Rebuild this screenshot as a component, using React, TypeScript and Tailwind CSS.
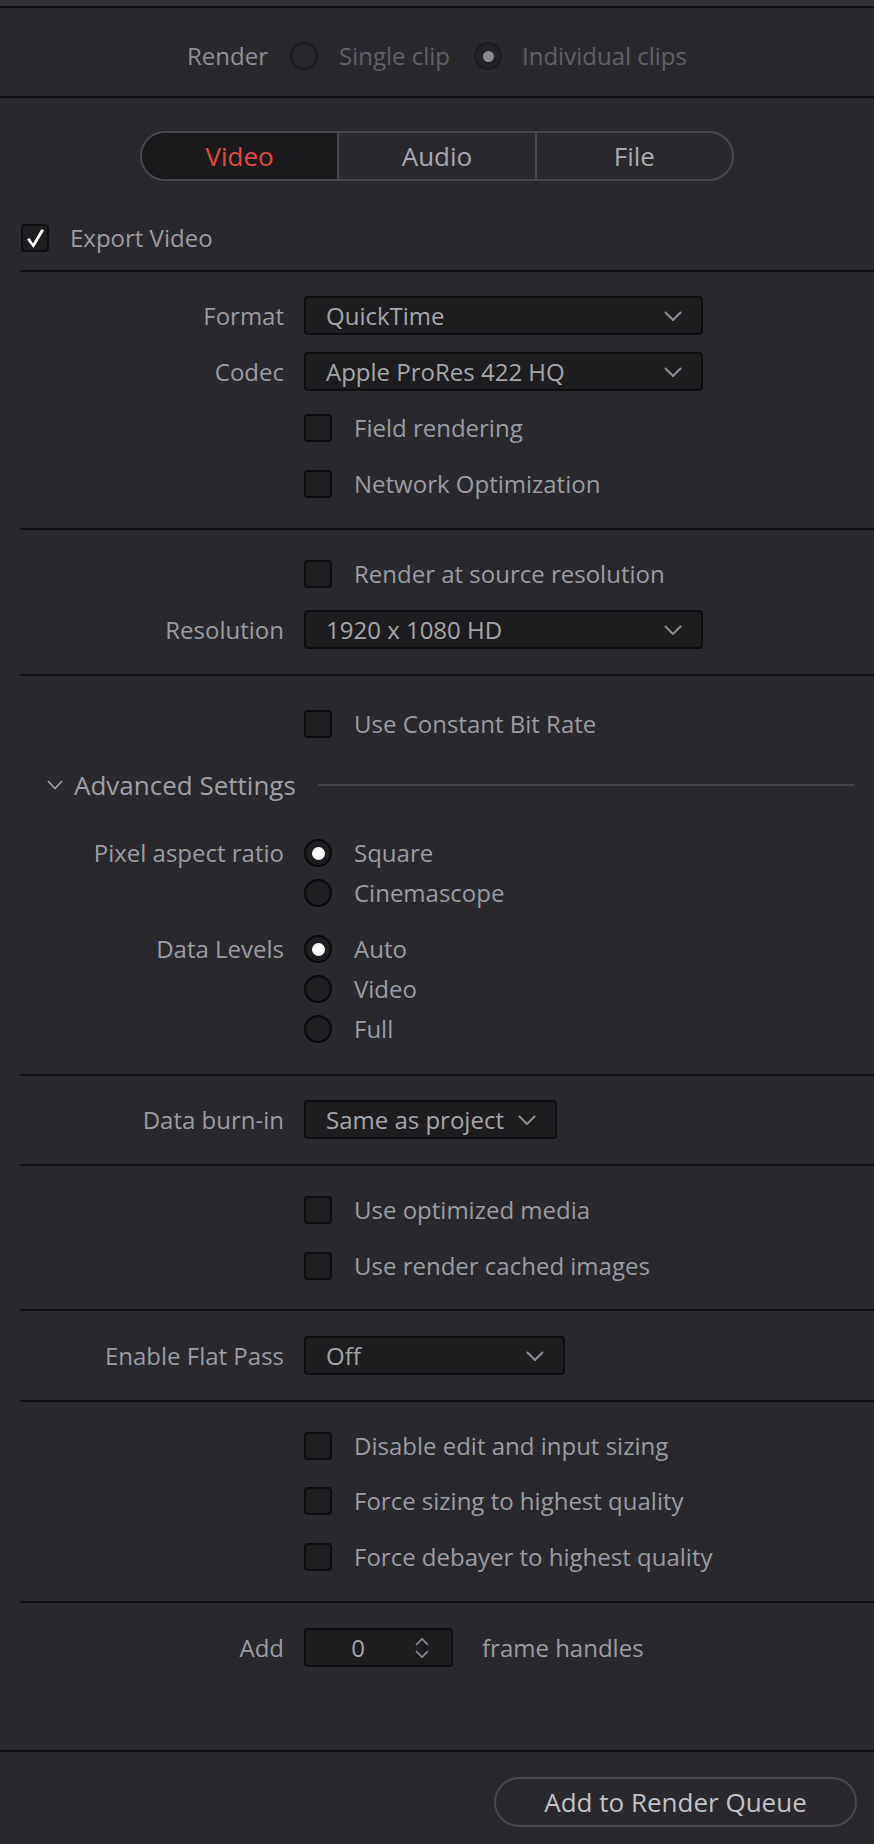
import React from "react"

function Chevron() {
    return (
        <svg width="18" height="10" viewBox="0 0 18 10" className="shrink-0">
            <polyline points="1,1 9,9 17,1" fill="none" stroke="#8e8e92" strokeWidth="2" />
        </svg>
    )
}

function Line({ inset = true, className = "" }: { inset?: boolean; className?: string }) {
    return <div className={`h-[2px] bg-[#111113] ${inset ? "ml-[20px]" : ""} ${className}`} />
}

function Box() {
    return <div className="w-[28px] h-[28px] shrink-0 rounded-[4px] bg-[#1e1e20] border-2 border-[#0e0e10]" />
}

function Check({ label, className = "" }: { label: string; className?: string }) {
    return (
        <div className={`flex items-center pl-[304px] gap-[22px] leading-[28px] ${className}`}>
            <Box />
            <span>{label}</span>
        </div>
    )
}

function Dropdown({ value, width }: { value: string; width?: string }) {
    return (
        <div className={`h-[39px] ${width ?? ""} rounded-[4px] bg-[#1d1d1f] border-2 border-[#0e0e10] flex items-center justify-between gap-[14px] pl-[20px] pr-[19px] text-[#a6a6aa]`}>
            <span>{value}</span>
            <Chevron />
        </div>
    )
}

function Field({ label, children, className = "" }: { label: string; children: React.ReactNode; className?: string }) {
    return (
        <div className={`flex items-center ${className}`}>
            <div className="w-[284px] text-right">{label}</div>
            <div className="ml-[20px] flex items-center">{children}</div>
        </div>
    )
}

function Radio({ on }: { on?: boolean }) {
    return (
        <div className="w-[28px] h-[28px] shrink-0 rounded-full bg-[#1e1e20] border-2 border-[#0b0b0d] flex items-center justify-center">
            {on && <div className="w-[13px] h-[13px] rounded-full bg-white" />}
        </div>
    )
}

function RadioGroup({ label, options, className = "" }: { label: string; options: string[]; className?: string }) {
    return (
        <div className={`flex items-start leading-[28px] ${className}`}>
            <div className="w-[284px] text-right">{label}</div>
            <div className="ml-[20px] flex flex-col gap-[12px]">
                {options.map((o, i) => (
                    <div key={o} className="flex items-center gap-[22px]">
                        <Radio on={i === 0} />
                        <span>{o}</span>
                    </div>
                ))}
            </div>
        </div>
    )
}

export default function App() {
    return (
        <div className="w-[874px] h-[1844px] bg-[#28282d] font-['Open_Sans',sans-serif] text-[24px] text-[#9c9ca0] overflow-hidden">
            <div className="h-[6px] bg-[#303036]" />
            <Line inset={false} />

            {/* render mode */}
            <div className="h-[88px] pt-[8px] flex items-center justify-center leading-[28px]">
                <span className="text-[#909094]">Render</span>
                <div className="ml-[22px] w-[28px] h-[28px] rounded-full border-2 border-[#1c1c1f]" />
                <span className="ml-[21px] text-[#606066]">Single clip</span>
                <div className="ml-[24px] w-[28px] h-[28px] rounded-full border-2 border-[#1c1c1f] bg-[#222225] flex items-center justify-center">
                    <div className="w-[11px] h-[11px] rounded-full bg-[#8a8a8f]" />
                </div>
                <span className="ml-[20px] text-[#606066]">Individual clips</span>
            </div>
            <Line inset={false} />

            {/* tabs */}
            <div className="mt-[33px] mx-auto w-[594px] h-[50px] rounded-full border-2 border-[#47484e] flex overflow-hidden text-[26px]">
                <div className="flex-1 flex items-center justify-center bg-[#1a1a1c] text-[#e2493f]">Video</div>
                <div className="flex-1 flex items-center justify-center border-l-2 border-[#47484e] text-[#a9a9ad]">Audio</div>
                <div className="flex-1 flex items-center justify-center border-l-2 border-[#47484e] text-[#a9a9ad]">File</div>
            </div>

            <div className="mt-[43px] flex items-center pl-[21px] gap-[21px] leading-[28px]">
                <div className="w-[28px] h-[28px] rounded-[4px] bg-[#1e1e20] border-2 border-[#0e0e10] flex items-center justify-center">
                    <svg width="22" height="22" viewBox="0 0 22 22">
                        <path d="M3 12.5 L5.5 11 L9 16.5 L17.5 2 L20 3.5 L9.5 21 Z" fill="#ffffff" />
                    </svg>
                </div>
                <span>Export Video</span>
            </div>
            <Line className="mt-[18px]" />

            <Field label="Format" className="mt-[24px]">
                <Dropdown value="QuickTime" width="w-[399px]" />
            </Field>
            <Field label="Codec" className="mt-[17px]">
                <Dropdown value="Apple ProRes 422 HQ" width="w-[399px]" />
            </Field>
            <Check label="Field rendering" className="mt-[23px]" />
            <Check label="Network Optimization" className="mt-[28px]" />
            <Line className="mt-[30px]" />

            <Check label="Render at source resolution" className="mt-[30px]" />
            <Field label="Resolution" className="mt-[22px]">
                <Dropdown value="1920 x 1080 HD" width="w-[399px]" />
            </Field>
            <Line className="mt-[25px]" />

            <Check label="Use Constant Bit Rate" className="mt-[34px]" />

            {/* advanced */}
            <div className="mt-[32px] h-[30px] flex items-center pl-[47px] pr-[20px] text-[26px] text-[#a0a0a4]">
                <svg width="16" height="10" viewBox="0 0 16 10" className="shrink-0">
                    <polyline points="1,1 8,8.5 15,1" fill="none" stroke="#a0a0a4" strokeWidth="1.8" />
                </svg>
                <span className="ml-[11px] whitespace-nowrap">Advanced Settings</span>
                <div className="ml-[22px] flex-1 h-[2px] bg-[#434349]" />
            </div>

            <RadioGroup label="Pixel aspect ratio" options={["Square", "Cinemascope"]} className="mt-[39px]" />
            <RadioGroup label="Data Levels" options={["Auto", "Video", "Full"]} className="mt-[28px]" />
            <Line className="mt-[31px]" />

            <Field label="Data burn-in" className="mt-[24px]">
                <Dropdown value="Same as project" />
            </Field>
            <Line className="mt-[25px]" />

            <Check label="Use optimized media" className="mt-[30px]" />
            <Check label="Use render cached images" className="mt-[28px]" />
            <Line className="mt-[29px]" />

            <Field label="Enable Flat Pass" className="mt-[25px]">
                <Dropdown value="Off" width="w-[261px]" />
            </Field>
            <Line className="mt-[25px]" />

            <Check label="Disable edit and input sizing" className="mt-[30px]" />
            <Check label="Force sizing to highest quality" className="mt-[27px]" />
            <Check label="Force debayer to highest quality" className="mt-[28px]" />
            <Line className="mt-[30px]" />

            <Field label="Add" className="mt-[25px]">
                <div className="h-[39px] w-[149px] rounded-[4px] bg-[#1d1d1f] border-2 border-[#0e0e10] flex items-center text-[#a6a6aa]">
                    <span className="w-[104px] text-center">0</span>
                    <svg width="16" height="22" viewBox="0 0 16 22" className="ml-[4px]">
                        <polyline points="2,8 8,2 14,8" fill="none" stroke="#8e8e92" strokeWidth="1.6" />
                        <polyline points="2,14 8,20 14,14" fill="none" stroke="#8e8e92" strokeWidth="1.6" />
                    </svg>
                </div>
                <span className="ml-[29px]">frame handles</span>
            </Field>
            <Line inset={false} className="mt-[83px]" />

            <div className="mt-[25px] flex justify-end pr-[17px]">
                <button className="w-[363px] h-[50px] rounded-full border-2 border-[#46474d] text-[26px] text-[#c3c3c7]">
                    Add to Render Queue
                </button>
            </div>
        </div>
    )
}
